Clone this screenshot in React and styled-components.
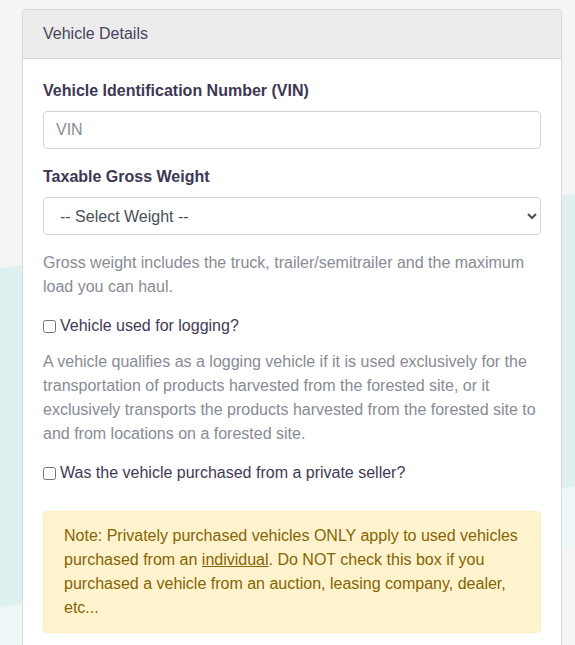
import React, { useState } from 'react';
import styled, { createGlobalStyle } from 'styled-components';

const GlobalStyle = createGlobalStyle`
  * { box-sizing: border-box; }
  html, body {
    margin: 0;
    padding: 0;
    background: #f5f5f5;
    font-family: "Liberation Sans", Arial, sans-serif;
    font-size: 16px;
    line-height: 1.5;
  }
`;

const Page = styled.div`
  position: relative;
  min-height: 100vh;
  padding: 9px 13px 0 22px;
  overflow: hidden;
`;

const Backdrop = styled.svg`
  position: fixed;
  inset: 0;
  width: 100%;
  height: 100%;
  z-index: 0;
`;

const Card = styled.section`
  position: relative;
  z-index: 1;
  background: #fff;
  border: 1px solid #dadada;
  border-bottom: none;
  border-radius: 4px 4px 0 0;
`;

const CardHeader = styled.header`
  padding: 12px 20px;
  background: #ececec;
  border-bottom: 1px solid #d6d6d6;
  border-radius: 3px 3px 0 0;
  color: #48435c;
  line-height: 24px;
`;

const CardBody = styled.div`
  padding: 20px 20px 12px;
`;

const FormGroup = styled.div`
  margin-bottom: 16px;
`;

const Label = styled.label`
  display: block;
  margin-bottom: 8px;
  font-weight: 700;
  color: #3d3753;
`;

const TextInput = styled.input`
  display: block;
  width: 100%;
  height: 38px;
  padding: 6px 12px;
  font: inherit;
  color: #495057;
  border: 1px solid #ced4da;
  border-radius: 4px;
  background: #fff;
  &::placeholder { color: #8a8d96; }
`;

const Select = styled.select`
  display: block;
  width: 100%;
  height: 38px;
  padding: 6px 12px;
  font: inherit;
  color: #495057;
  border: 1px solid #ced4da;
  border-radius: 4px;
  background: #fff;
`;

const Help = styled.p`
  margin: 0 0 ${(p) => p.$mb || 16}px;
  color: #878b95;
`;

const CheckRow = styled.label`
  display: flex;
  align-items: center;
  gap: 4px;
  margin-top: -1px;
  margin-bottom: ${(p) => p.$mb}px;
  color: #3f3a55;
  cursor: pointer;

  input {
    margin: 0;
    width: 13px;
    height: 13px;
  }
`;

const Alert = styled.div`
  padding: 12px 20px;
  background: #fff3cd;
  border: 1px solid #ffeeba;
  border-radius: 4px;
  color: #856404;

  u { text-decoration: underline; }
`;

const App = () => {
  const [vin, setVin] = useState('');
  const [weight, setWeight] = useState('');
  const [logging, setLogging] = useState(false);
  const [privateSeller, setPrivateSeller] = useState(false);

  return (
    <>
      <GlobalStyle />
      <Page>
        <Backdrop viewBox="0 0 575 645" preserveAspectRatio="none">
          <path d="M0 600 C 200 560, 400 530, 575 480 L575 548 L575 645 L0 645 Z" fill="#eef6f7" />
          <path d="M575 548 C 400 575, 250 610, 120 645 L575 645 Z" fill="#f5f5f5" />
          <path d="M0 268 C 200 240, 400 215, 575 194 L575 486 C 400 520, 200 570, 0 608 Z" fill="#dff0f1" />
        </Backdrop>
        <Card>
          <CardHeader>Vehicle Details</CardHeader>
          <CardBody>
            <FormGroup>
              <Label htmlFor="vin">Vehicle Identification Number (VIN)</Label>
              <TextInput id="vin" placeholder="VIN" value={vin} onChange={(e) => setVin(e.target.value)} />
            </FormGroup>
            <FormGroup>
              <Label htmlFor="weight">Taxable Gross Weight</Label>
              <Select id="weight" value={weight} onChange={(e) => setWeight(e.target.value)}>
                <option value="">-- Select Weight --</option>
                <option value="55000">55,000 - 55,999 lbs</option>
                <option value="56000">56,000 - 56,999 lbs</option>
              </Select>
            </FormGroup>
            <Help>Gross weight includes the truck, trailer/semitrailer and the maximum load you can haul.</Help>
            <CheckRow $mb={12}>
              <input type="checkbox" checked={logging} onChange={() => setLogging(!logging)} />
              Vehicle used for logging?
            </CheckRow>
            <Help>
              A vehicle qualifies as a logging vehicle if it is used exclusively for the transportation of
              products harvested from the forested site, or it exclusively transports the products harvested
              from the forested site to and from locations on a forested site.
            </Help>
            <CheckRow $mb={26}>
              <input type="checkbox" checked={privateSeller} onChange={() => setPrivateSeller(!privateSeller)} />
              Was the vehicle purchased from a private seller?
            </CheckRow>
            <Alert>
              Note: Privately purchased vehicles ONLY apply to used vehicles purchased from an{' '}
              <u>individual</u>. Do NOT check this box if you purchased a vehicle from an auction, leasing
              company, dealer, etc...
            </Alert>
          </CardBody>
        </Card>
      </Page>
    </>
  );
};

export default App;
